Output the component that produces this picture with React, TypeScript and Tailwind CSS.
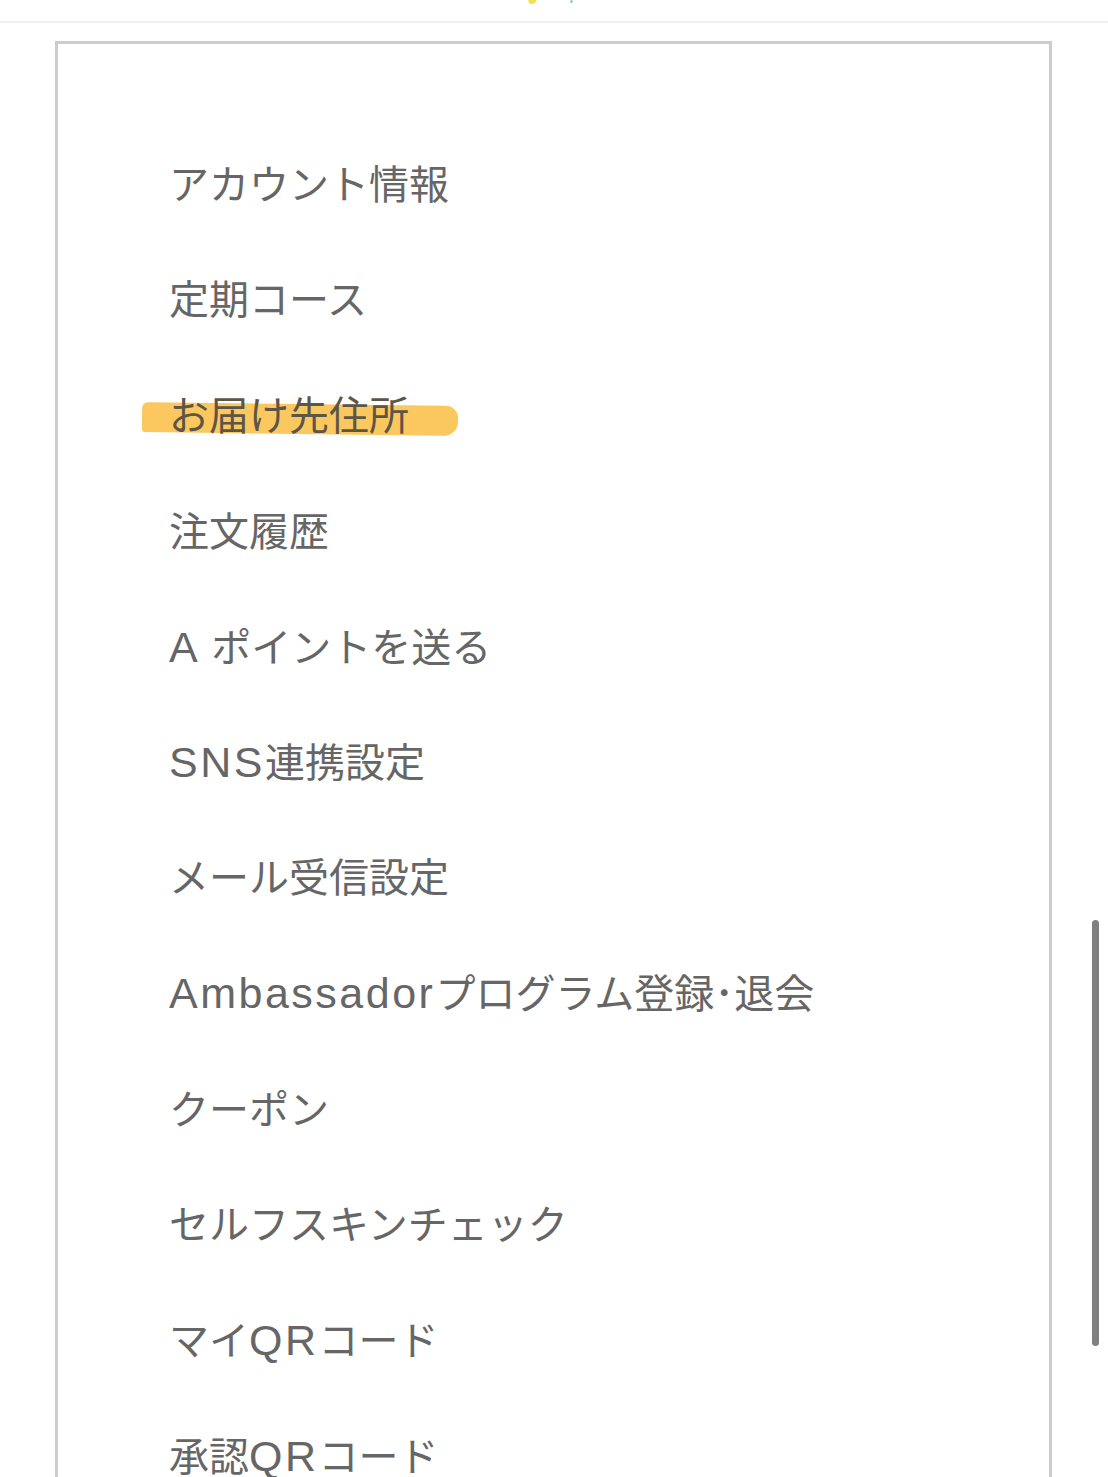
import React from "react";

const items = [
  "アカウント情報",
  "定期コース",
  "お届け先住所",
  "注文履歴",
  "A ポイントを送る",
  "SNS連携設定",
  "メール受信設定",
  "Ambassadorプログラム登録･退会",
  "クーポン",
  "セルフスキンチェック",
  "マイQRコード",
  "承認QRコード",
];

// latin words are set a bit wider than the kana, like Hiragino does
function Label({ text }: { text: string }) {
  const parts = text.split(/([A-Za-z]+)/).filter(Boolean);
  return (
    <span className="whitespace-pre">
      {parts.map((p, i) =>
        /^[A-Za-z]+$/.test(p) ? (
          <span key={i} className="text-[43px] tracking-[2.5px]">
            {p}
          </span>
        ) : (
          <span key={i}>{p}</span>
        )
      )}
    </span>
  );
}

export default function App() {
  return (
    <div
      className="relative h-[1477px] overflow-hidden bg-white"
      style={{ fontFamily: '"Liberation Sans", "Noto Sans CJK JP", sans-serif' }}
    >
      {/* header strip */}
      <div className="relative h-[23px] border-b-2 border-[#efefef]">
        <div className="absolute left-[528px] top-0 h-[4px] w-[8px] -skew-x-12 rounded-b-sm bg-[#f2e14a]" />
        <div className="absolute left-[570px] top-0 h-[3px] w-[3px] rounded-full bg-[#9cc6c0]" />
      </div>

      {/* menu card */}
      <div className="ml-[55px] mr-[56px] mt-[18px] border-[3px] border-[#cccccc] pl-[111px] pt-[83px]">
        <ul className="flex flex-col">
          {items.map((label, i) => (
            <li
              key={i}
              className="flex h-[115.6px] items-center text-[40px] leading-none text-[#666666]"
            >
              {i === 2 ? (
                <span className="relative">
                  <span className="absolute left-[-27px] top-[8px] h-[30px] w-[316px] rotate-[0.7deg] rounded-[6px_12px_14px_4px] bg-[#f9c24c] opacity-90" />
                  <span className="relative text-[#5d5647]">
                    <Label text={label} />
                  </span>
                </span>
              ) : (
                <Label text={label} />
              )}
            </li>
          ))}
        </ul>
      </div>

      {/* scrollbar */}
      <div className="absolute left-[1092px] top-[920px] h-[426px] w-[7px] rounded-full bg-[#808080]" />
    </div>
  );
}
